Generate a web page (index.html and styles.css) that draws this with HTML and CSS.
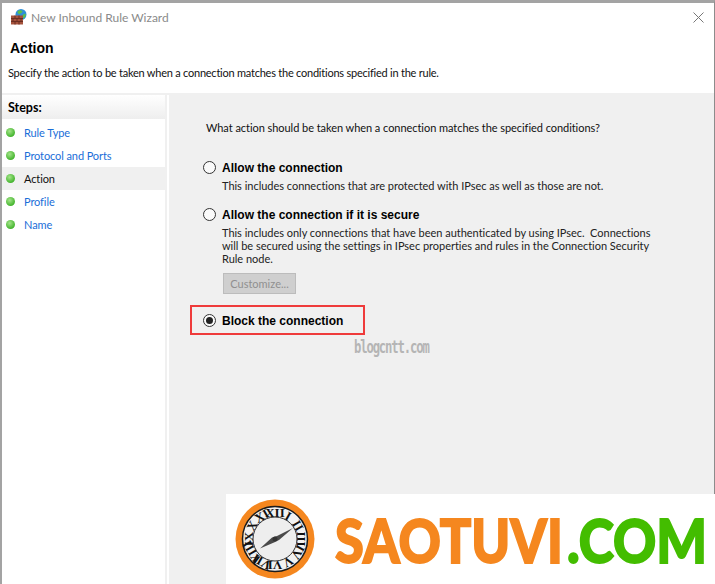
FILE: index.html
```html
<!DOCTYPE html>
<html lang="en">
<head>
<meta charset="utf-8">
<title>New Inbound Rule Wizard</title>
<link rel="stylesheet" href="styles.css">
</head>
<body>
<div class="window">
  <header class="titlebar">
    <svg class="app-icon" width="18" height="18" viewBox="0 0 18 18">
      <circle cx="11" cy="6.500" r="5.500" fill="#2f8fd8"/>
      <path d="M7.500 3.500c2-2 4-1.500 5 0c-1 1.500-2 2-3 2.500c-1 .5-2-1-2-2.500z" fill="#5cc04a"/>
      <path d="M12.500 7l3-1.500c.5 2-.5 4-2 5z" fill="#5cc04a"/>
      <rect x="1" y="7.500" width="12" height="9" fill="#a5523c"/>
      <path d="M1 10.500h12M1 13.500h12M5 7.500v3M9 7.500v3M3 10.500v3M7 10.500v3M11 10.500v3M5 13.500v3M9 13.500v3" stroke="#6d2f22" stroke-width="1" fill="none"/>
    </svg>
    <span class="window-title">New Inbound Rule Wizard</span>
    <svg class="close" width="11" height="11" viewBox="0 0 11 11"><path d="M.5.5l10 10M10.500.5l-10 10" stroke="#777" stroke-width="1" fill="none"/></svg>
  </header>
  <section class="page-head">
    <h1>Action</h1>
    <p>Specify the action to be taken when a connection matches the conditions specified in the rule.</p>
  </section>
  <div class="body">
    <nav class="steps">
      <div class="steps-head">Steps:</div>
      <ul class="step-list">
        <li class="step"><i class="dot"></i>Rule Type</li>
        <li class="step"><i class="dot"></i>Protocol and Ports</li>
        <li class="step current"><i class="dot"></i>Action</li>
        <li class="step"><i class="dot"></i>Profile</li>
        <li class="step"><i class="dot"></i>Name</li>
      </ul>
    </nav>
    <main class="content">
      <p class="question">What action should be taken when a connection matches the specified conditions?</p>
      <div class="option">
        <div class="choice"><i class="radio"></i><b>Allow the connection</b></div>
        <p class="note">This includes connections that are protected with IPsec as well as those are not.</p>
      </div>
      <div class="option">
        <div class="choice"><i class="radio"></i><b>Allow the connection if it is secure</b></div>
        <p class="note">This includes only connections that have been authenticated by using IPsec.&nbsp; Connections<br>will be secured using the settings in IPsec properties and rules in the Connection Security<br>Rule node.</p>
        <button class="customize" disabled>Customize...</button>
      </div>
      <div class="choice blocked"><i class="radio on"></i><b>Block the connection</b></div>
      <span class="watermark">blogcntt.com</span>
    </main>
  </div>
</div>
<aside class="banner">
  <svg class="clock" width="80" height="80" viewBox="0 0 80 80">
    <circle cx="40" cy="40" r="39.500" fill="#f5871f"/>
    <circle cx="40" cy="40" r="32.500" fill="#f2f2f2" stroke="#1c1c1c" stroke-width="1.500"/>
    <g class="numerals">
      <text x="40" y="18" text-anchor="middle">XII</text>
      <text x="40" y="18" text-anchor="middle" transform="rotate(30 40 40)">I</text>
      <text x="40" y="18" text-anchor="middle" transform="rotate(60 40 40)">II</text>
      <text x="40" y="18" text-anchor="middle" transform="rotate(90 40 40)">III</text>
      <text x="40" y="18" text-anchor="middle" transform="rotate(120 40 40)">IV</text>
      <text x="40" y="18" text-anchor="middle" transform="rotate(150 40 40)">V</text>
      <text x="40" y="18" text-anchor="middle" transform="rotate(180 40 40)">VI</text>
      <text x="40" y="18" text-anchor="middle" transform="rotate(210 40 40)">VII</text>
      <text x="40" y="18" text-anchor="middle" transform="rotate(240 40 40)">VIII</text>
      <text x="40" y="18" text-anchor="middle" transform="rotate(270 40 40)">IX</text>
      <text x="40" y="18" text-anchor="middle" transform="rotate(300 40 40)">X</text>
      <text x="40" y="18" text-anchor="middle" transform="rotate(330 40 40)">XI</text>
    </g>
    <circle cx="40" cy="40" r="22" fill="#eeeeee" stroke="#333" stroke-width="1"/>
    <path d="M25 49.500L37 38.500L42 37L58 29L44 41L39 43.500z" fill="#4a4a4a"/>
    <circle cx="40" cy="40" r="2.500" fill="#333"/>
  </svg>
  <div class="brand"><span class="brand-main">SAOTUVI</span><span class="brand-tld">.COM</span></div>
</aside>
</body>
</html>
```
FILE: styles.css
```css
html, body { margin: 0; padding: 0; }
body {
  width: 715px;
  height: 584px;
  overflow: hidden;
  position: relative;
  background: #fff;
  font-family: "Lato", "Liberation Sans", Arial, sans-serif;
  font-size: 11px;
  color: #111;
}
p, h1, ul { margin: 0; padding: 0; }
.window {
  height: 581px;
  border-top: 3px solid #a3a3a3;
  border-left: 2px solid #a3a3a3;
  border-right: 1px solid #8c8c8c;
  display: flex;
  flex-direction: column;
  background: #fff;
}
.titlebar {
  height: 28px;
  flex: none;
  display: flex;
  align-items: center;
  padding: 0 10px 0 8px;
}
.app-icon { flex: none; margin-right: 3px; }
.window-title { color: #8a8a8a; flex: 1; font-size: 12px; }
.page-head { height: 62px; flex: none; padding-left: 6px; }
.page-head h1 {
  font: bold 14px/17px "Liberation Sans", Arial, sans-serif;
  padding: 9px 0 8px 2px;
  color: #000;
}
.page-head p { line-height: 15px; color: #111; letter-spacing: -.23px; }
.body {
  flex: 1;
  display: flex;
  border-top: 2px solid #f0f0f0;
}
.steps {
  width: 163px;
  flex: none;
  border-right: 2px solid #f0f0f0;
  margin-right: 2px;
}
.steps-head {
  height: 24px;
  line-height: 26px;
  padding-left: 6px;
  font-size: 12.500px;
  font-weight: bold;
  background: linear-gradient(#ffffff, #eeeeee);
  color: #000;
}
.step-list { list-style: none; margin-top: 2px; }
.step {
  height: 23px;
  display: flex;
  align-items: center;
  padding-left: 4px;
  color: #1a6ed8;
  letter-spacing: -.1px;
}
.step.current { background: #f0f0f0; color: #111; }
.dot {
  width: 9px;
  height: 9px;
  border-radius: 50%;
  margin-right: 9px;
  background: radial-gradient(circle at 40% 35%, #a4e48a, #45b52f 70%, #3a9a2a);
}
.content {
  flex: 1;
  position: relative;
  background: #f0f0f0;
  padding: 25px 0 0 37px;
}
.question { line-height: 15px; margin-bottom: 24px; letter-spacing: -.05px; }
.option { margin-bottom: 14px; }
.choice {
  display: flex;
  align-items: center;
  height: 17px;
}
.choice b { color: #000; font: bold 12px "Liberation Sans", Arial, sans-serif; }
.radio {
  width: 11px;
  height: 11px;
  flex: none;
  border: 1px solid #333;
  border-radius: 50%;
  background: #fafafa;
  margin: 0 6px 0 -3px;
  position: relative;
}
.radio.on::after {
  content: "";
  position: absolute;
  left: 2px;
  top: 2px;
  width: 7px;
  height: 7px;
  border-radius: 50%;
  background: #222;
}
.note { margin: 3px 0 0 16px; line-height: 13px; color: #222; letter-spacing: -.02px; }
.customize {
  display: block;
  margin: 8px 0 0 17px;
  width: 73px;
  height: 21px;
  padding: 0;
  font: 11px "Lato", Arial, sans-serif;
  color: #8f8f8f;
  background: #cfcfcf;
  border: 1px solid #bcbcbc;
}
.choice.blocked {
  width: 159px;
  height: 26px;
  margin: -3px 0 0 -16px;
  padding-left: 12px;
  border: 2px solid #ef3b3b;
}
.choice.blocked .radio { margin-left: -1px; margin-top: 1px; }
.choice.blocked b { padding-top: 2px; }
.watermark {
  position: absolute;
  left: 185px;
  top: 242px;
  font: bold 17px "DejaVu Sans Mono", monospace;
  letter-spacing: -1.600px;
  color: #b5b5b5;
  transform: scaleX(.72);
  transform-origin: left center;
}
.banner {
  position: absolute;
  left: 226px;
  top: 494px;
  width: 489px;
  height: 90px;
  background: #fff;
  display: flex;
  align-items: center;
}
.clock { flex: none; margin-left: 9px; margin-top: -1px; }
.numerals text {
  font: bold 13px "Liberation Serif", serif;
  fill: #111;
}
.brand {
  flex: none;
  display: flex;
  gap: 5px;
  margin-left: 20px;
  font: 900 61px/1 "Lato", sans-serif;
  white-space: nowrap;
}
.brand-main, .brand-tld {
  display: block;
  transform-origin: left center;
  -webkit-text-stroke: 1.800px currentColor;
}
.brand-main { color: #f5871f; width: 227px; transform: scaleX(.857); }
.brand-tld { color: #43bd00; width: 138px; transform: scaleX(.875); }
```
